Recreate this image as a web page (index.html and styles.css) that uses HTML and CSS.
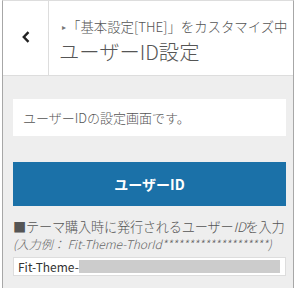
FILE: index.html
```html
<!DOCTYPE html>
<html lang="ja">
<head>
    <meta charset="utf-8">
    <title>ユーザーID設定</title>
    <link rel="stylesheet" href="styles.css">
</head>
<body>
    <div class="panel">
        <header class="panel-head">
            <button class="back" type="button" aria-label="戻る">
                <svg width="10" height="12" viewBox="0 0 10 12"><path d="M7.5 1.2 L2.8 6 L7.5 10.8" fill="none" stroke="#222" stroke-width="2.4"/></svg>
            </button>
            <div class="head-text">
                <span class="crumb"><span class="arrow">▸</span>「基本設定[THE]」をカスタマイズ中</span>
                <h1>ユーザーID設定</h1>
            </div>
        </header>

        <section class="panel-body">
            <p class="desc">ユーザーIDの設定画面です。</p>

            <div class="title-bar">ユーザーID</div>

            <label class="field-label" for="userId">■テーマ購入時に発行されるユーザー<i>ID</i>を入力</label>
            <span class="field-note">(入力例： Fit-Theme-ThorId********************)</span>
            <div class="field">
                <span class="prefix">Fit-Theme-</span>
                <span class="masked"></span>
            </div>
        </section>
    </div>
</body>
</html>
```

FILE: styles.css
```css
html, body {
    margin: 0;
    padding: 0;
    background: #fff;
}
body {
    font-family: "Noto Sans CJK JP", "Noto Sans", sans-serif;
    color: #555;
}
.panel {
    margin-left: 2px;
    width: 292px;
    height: 288px;
    border-left: solid 1px #a7a7a7;
    border-right: solid 1px #a7a7a7;
    border-top: solid 1px #ddd;
    background: #eee;
    box-sizing: border-box;
}
.panel-head {
    display: flex;
    height: 74px;
    background: #fff;
    border-bottom: solid 1px #ddd;
}
.back {
    width: 46px;
    padding: 0;
    margin: 0;
    border: 0;
    border-right: solid 1px #ddd;
    background: #fff;
    display: flex;
    align-items: center;
    justify-content: center;
}
.back svg {
    display: block;
    margin-top: -2px;
}
.head-text {
    display: flex;
    flex-direction: column;
    padding: 17px 0 0 13px;
}
.crumb {
    font-size: 13.4px;
    line-height: 16px;
    font-weight: 300;
    color: #555;
    white-space: nowrap;
}
.arrow {
    font-size: 8px;
    vertical-align: 2px;
    margin-right: 1px;
    color: #777;
}
h1 {
    margin: 3px 0 0 -3px;
    font-size: 20.3px;
    line-height: 26px;
    font-weight: 300;
    color: #555;
    white-space: nowrap;
}
.panel-body {
    padding: 23px 7px 0 10px;
    display: flex;
    flex-direction: column;
}
.desc {
    margin: 0;
    height: 37px;
    padding: 0 10px;
    background: #fff;
    font-size: 13px;
    line-height: 37px;
    font-weight: 300;
    color: #555;
}
.title-bar {
    margin-top: 26px;
    height: 44px;
    background: #1b71a8;
    color: #fff;
    font-size: 14px;
    font-weight: 700;
    line-height: 44px;
    text-align: center;
}
.field-label {
    margin-top: 12px;
    font-size: 13.2px;
    line-height: 18px;
    font-weight: 300;
    color: #555;
    white-space: nowrap;
    letter-spacing: -0.2px;
}
.field-note {
    font-size: 12px;
    line-height: 16px;
    font-style: italic;
    font-weight: 300;
    color: #666;
    white-space: nowrap;
}
.field {
    margin-top: 5px;
    height: 19px;
    border: solid 1px #ddd;
    background: #fff;
    box-sizing: border-box;
    display: flex;
    align-items: center;
    padding: 0 5px 0 4px;
}
.prefix {
    font-size: 12px;
    color: #333;
    white-space: nowrap;
}
.masked {
    flex: 1;
    height: 13px;
    background: #ccc;
}
```
